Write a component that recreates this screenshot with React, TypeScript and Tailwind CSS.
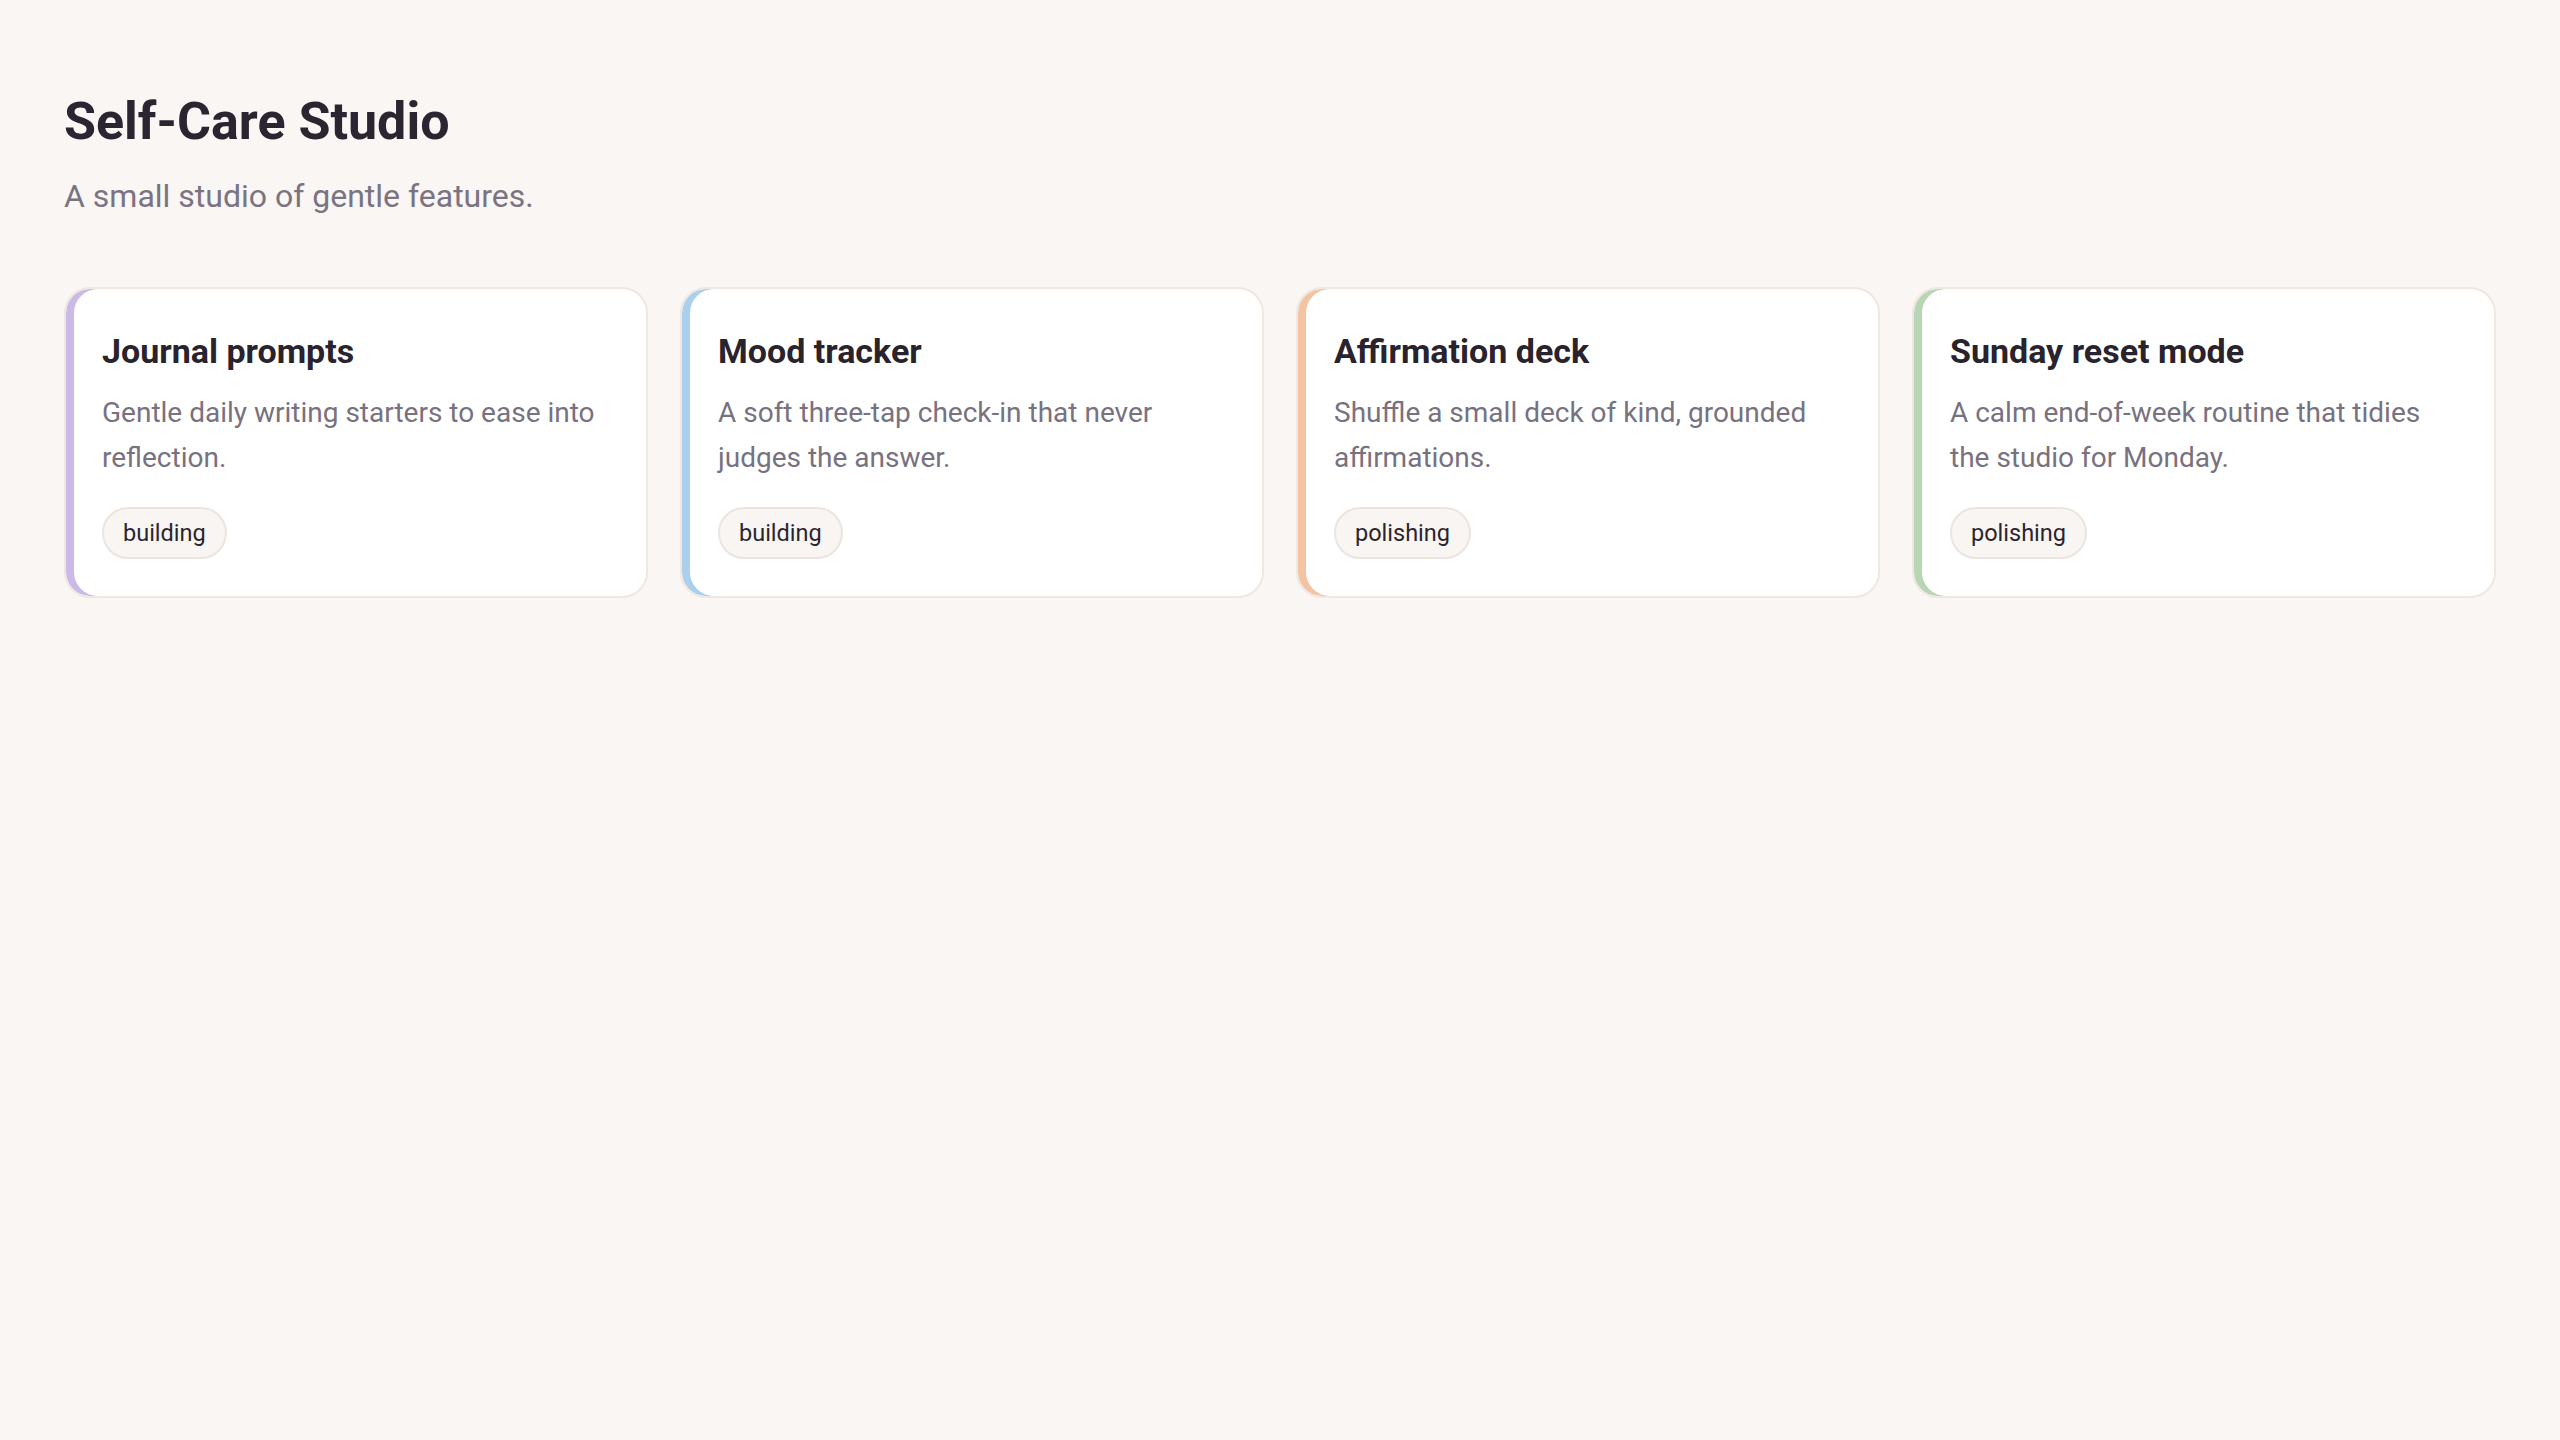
const features = [
  {
    title: "Journal prompts",
    body: "Gentle daily writing starters to ease into reflection.",
    status: "building",
    accent: "shadow-[inset_8px_0_0_#cbb9e8]",
  },
  {
    title: "Mood tracker",
    body: "A soft three-tap check-in that never judges the answer.",
    status: "building",
    accent: "shadow-[inset_8px_0_0_#aad0ee]",
  },
  {
    title: "Affirmation deck",
    body: "Shuffle a small deck of kind, grounded affirmations.",
    status: "polishing",
    accent: "shadow-[inset_8px_0_0_#f3c3a2]",
  },
  {
    title: "Sunday reset mode",
    body: "A calm end-of-week routine that tidies the studio for Monday.",
    status: "polishing",
    accent: "shadow-[inset_8px_0_0_#b8d5b4]",
  },
];

export default function App() {
  return (
    <div className="min-h-screen bg-[#faf6f3] px-[64px] pt-[91px] font-['Roboto',sans-serif]">
      <h1 className="text-[52px] leading-[62px] font-bold text-[#2a2530]">
        Self-Care Studio
      </h1>
      <p className="mt-[18px] text-[32px] leading-[50px] text-[#7a7382]">
        A small studio of gentle features.
      </p>

      <div className="mt-[66px] grid grid-cols-4 gap-[32px]">
        {features.map((f) => (
          <div
            key={f.title}
            className={`rounded-[26px] border-2 border-[#eee7e2] bg-white px-[36px] pt-[37px] pb-[37px] ${f.accent}`}
          >
            <h2 className="text-[34px] leading-[51px] font-bold text-[#28232d]">
              {f.title}
            </h2>
            <p className="mt-[14px] text-[28px] leading-[44.8px] text-[#78717f]">
              {f.body}
            </p>
            <div className="mt-[26px] flex">
              <span className="rounded-full border-2 border-[#ece5df] bg-[#f9f5f2] px-[19px] py-[8px] text-[23.5px] leading-[32px] text-[#2a2530]">
                {f.status}
              </span>
            </div>
          </div>
        ))}
      </div>
    </div>
  );
}
